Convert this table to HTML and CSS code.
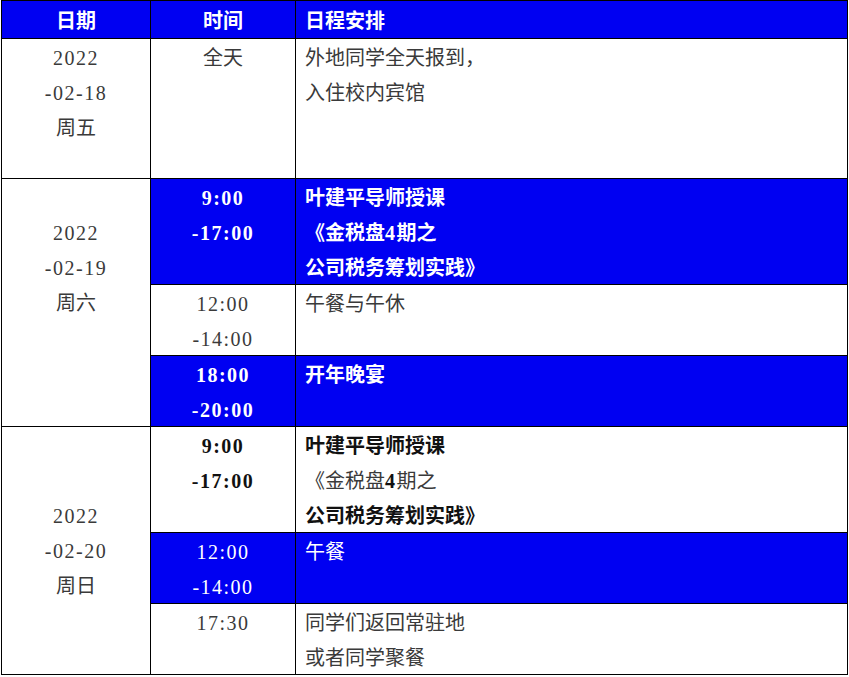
FILE: index.html
```html
<!DOCTYPE html>
<html lang="zh">
<head>
<meta charset="utf-8">
<title>日程安排</title>
<link rel="stylesheet" href="styles.css">
</head>
<body>
<table class="schedule">
  <colgroup>
    <col class="c-date">
    <col class="c-time">
    <col class="c-plan">
  </colgroup>
  <thead>
    <tr class="h-head">
      <th class="center">日期</th>
      <th class="center">时间</th>
      <th class="left">日程安排</th>
    </tr>
  </thead>
  <tbody>
    <tr class="h-140">
      <td class="date"><span class="n">2022</span><br><span class="n">-02-18</span><br>周五</td>
      <td class="time">全天</td>
      <td class="plan">外地同学全天报到，<br>入住校内宾馆</td>
    </tr>
    <tr class="h-106 blue bold">
      <td class="date plain pad-35" rowspan="3"><span class="n">2022</span><br><span class="n">-02-19</span><br>周六</td>
      <td class="time"><span class="n">9:00</span><br><span class="n">-17:00</span></td>
      <td class="plan">叶建平导师授课<br>《金税盘<span class="n">4</span>期之<br>公司税务筹划实践》</td>
    </tr>
    <tr class="h-70">
      <td class="time"><span class="n">12:00</span><br><span class="n">-14:00</span></td>
      <td class="plan">午餐与午休</td>
    </tr>
    <tr class="h-70 blue bold">
      <td class="time"><span class="n">18:00</span><br><span class="n">-20:00</span></td>
      <td class="plan">开年晚宴</td>
    </tr>
    <tr class="h-107 dark">
      <td class="date plain pad-73" rowspan="3"><span class="n">2022</span><br><span class="n">-02-20</span><br>周日</td>
      <td class="time bold"><span class="n">9:00</span><br><span class="n">-17:00</span></td>
      <td class="plan"><b>叶建平导师授课</b><br>《金税盘<b class="n">4</b>期之<br><b>公司税务筹划实践》</b></td>
    </tr>
    <tr class="h-71 blue">
      <td class="time"><span class="n">12:00</span><br><span class="n">-14:00</span></td>
      <td class="plan">午餐</td>
    </tr>
    <tr class="h-71">
      <td class="time"><span class="n">17:30</span></td>
      <td class="plan">同学们返回常驻地<br>或者同学聚餐</td>
    </tr>
  </tbody>
</table>
</body>
</html>
```

FILE: styles.css
```css
html, body {
  margin: 0;
  padding: 0;
  background: #ffffff;
}

body {
  padding: 0 0 0 1px;
}

.schedule {
  border-collapse: collapse;
  table-layout: fixed;
  width: 846px;
  font-family: "Noto Sans CJK SC", "Liberation Serif", sans-serif;
  font-size: 20px;
  line-height: 35px;
  color: #3a3a3a;
}

.c-date { width: 149px; }
.c-time { width: 145px; }
.c-plan { width: 552px; }

.schedule th,
.schedule td {
  border: 1px solid #000000;
  padding: 0;
  vertical-align: top;
  overflow: hidden;
}

.schedule th {
  background: #0000f2;
  color: #ffffff;
  font-weight: 700;
  vertical-align: middle;
}

.center { text-align: center; }
.left { text-align: left; padding-left: 9px !important; }

.h-head { height: 38px; }
.h-140 { height: 140px; }
.h-106 { height: 106px; }
.h-107 { height: 106px; }
.h-70 { height: 70px; }
.h-71 { height: 71px; }

.date,
.time {
  text-align: center;
}

.plan {
  padding-left: 9px !important;
  text-align: left;
}

.pad-35 { padding-top: 35px !important; }
.pad-73 { padding-top: 70px !important; }

.n {
  font-family: "Liberation Serif", serif;
  font-size: 20px;
  letter-spacing: 1.5px;
  line-height: 1;
}

.blue td {
  background: #0000f2;
  color: #ffffff;
}

.blue td.plain {
  background: #ffffff;
  color: #3a3a3a;
  font-weight: 400;
}

.bold td {
  font-weight: 700;
}

td.bold {
  font-weight: 700;
}

.dark td.time,
.dark td.plan b {
  color: #111111;
}

.dark td.plan b {
  font-weight: 700;
}
```
